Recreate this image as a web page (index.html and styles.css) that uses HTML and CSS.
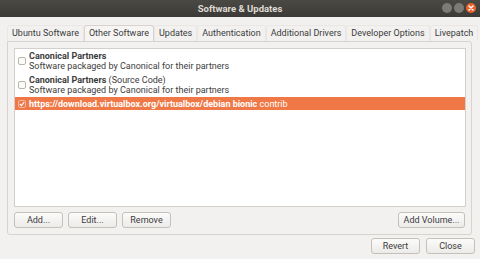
FILE: index.html
```html
<!DOCTYPE html>
<html>
<head>
    <title>Software &amp; Updates</title>
    <link rel="stylesheet" href="styles.css">
</head>
<body>
    <div class="titlebar">
        <div class="title">Software &amp; Updates</div>
        <div class="win-buttons">
            <span class="win-btn"></span>
            <span class="win-btn"></span>
            <span class="win-btn close">
                <svg width="10" height="10" viewBox="0 0 10 10"><path d="M3 3 L7 7 M7 3 L3 7" stroke="#fff" stroke-width="1.4" stroke-linecap="round"/></svg>
            </span>
        </div>
    </div>

    <div class="window">
        <div class="tabs">
            <div class="tab">Ubuntu Software</div>
            <div class="tab active">Other Software</div>
            <div class="tab">Updates</div>
            <div class="tab">Authentication</div>
            <div class="tab">Additional Drivers</div>
            <div class="tab">Developer Options</div>
            <div class="tab">Livepatch</div>
        </div>

        <div class="panel">
            <div class="source-list">
                <div class="source">
                    <span class="check"></span>
                    <div class="source-text">
                        <div><b>Canonical Partners</b></div>
                        <div>Software packaged by Canonical for their partners</div>
                    </div>
                </div>
                <div class="source">
                    <span class="check"></span>
                    <div class="source-text">
                        <div><b>Canonical Partners</b> (Source Code)</div>
                        <div>Software packaged by Canonical for their partners</div>
                    </div>
                </div>
                <div class="source selected">
                    <span class="check checked">
                        <svg width="6" height="6" viewBox="0 0 6 6"><path d="M0.8 3 L2.4 4.6 L5.2 1.2" fill="none" stroke="#fff" stroke-width="1.1"/></svg>
                    </span>
                    <div class="source-text">
                        <div><b>https://download.virtualbox.org/virtualbox/debian bionic</b> contrib</div>
                    </div>
                </div>
            </div>

            <div class="list-actions">
                <button class="btn">Add...</button>
                <button class="btn">Edit...</button>
                <button class="btn">Remove</button>
                <div class="spacer"></div>
                <button class="btn wide">Add Volume...</button>
            </div>
        </div>

        <div class="dialog-actions">
            <button class="btn">Revert</button>
            <button class="btn">Close</button>
        </div>
    </div>
</body>
</html>
```

FILE: styles.css
```css
body {
    margin: 0;
    width: 480px;
    height: 259px;
    overflow: hidden;
    background-color: #f2f1f0;
    font-family: 'Roboto', 'Liberation Sans', sans-serif;
    font-size: 9px;
    color: #3c3c3c;
}

.titlebar {
    height: 17px;
    background: linear-gradient(#4a4944, #3c3b37);
    display: flex;
    align-items: center;
    justify-content: center;
    position: relative;
}

.title {
    color: #dfdbd2;
    font-weight: bold;
    font-size: 9.5px;
}

.win-buttons {
    position: absolute;
    right: 4px;
    top: 3px;
    display: flex;
    gap: 2px;
}

.win-btn {
    width: 10px;
    height: 10px;
    border-radius: 50%;
    background: #7d7b75;
    display: flex;
    align-items: center;
    justify-content: center;
}

.win-btn.close {
    background: #e9632f;
}

.window {
    padding: 8px 8px 0 7px;
}

.tabs {
    display: flex;
}

.tab {
    padding: 0 4px;
    height: 15px;
    line-height: 15px;
    border: 1px solid #e9e7e4;
    border-bottom: none;
    border-radius: 3px 3px 0 0;
    white-space: nowrap;
}

.tab.active {
    background: #f6f5f4;
    border-color: #d7d4cf;
}

.panel {
    border: 1px solid #d7d4cf;
    border-radius: 0 3px 3px 3px;
    height: 194px;
    padding: 6px 5px 0 6px;
    box-sizing: border-box;
}

.source-list {
    background: #ffffff;
    border: 1px solid #d3d0cb;
    height: 159px;
    box-sizing: border-box;
}

.source {
    display: flex;
    align-items: center;
    gap: 3px;
    padding: 2px 3px;
    line-height: 10px;
}

.source.selected {
    background: #f07746;
    color: #ffffff;
    height: 13px;
    padding: 0 3px;
}

.check {
    width: 6px;
    height: 6px;
    border: 1px solid #b8b5b0;
    border-radius: 2px;
    background: #fbfbfa;
    display: flex;
    align-items: center;
    justify-content: center;
}

.check.checked {
    border-color: #f5b79c;
    background: #f07746;
}

.list-actions {
    display: flex;
    gap: 5px;
    margin-top: 5px;
}

.spacer {
    flex: 1;
}

.btn {
    height: 16px;
    width: 49px;
    padding: 0;
    font-family: inherit;
    font-size: 9px;
    color: #3c3c3c;
    background: linear-gradient(#fbfbfa, #ecebe9);
    border: 1px solid #c4c1bb;
    border-radius: 3px;
}

.btn.wide {
    width: 67px;
    margin-right: 1px;
}

.dialog-actions {
    display: flex;
    justify-content: flex-end;
    gap: 6px;
    margin-top: 3px;
    margin-right: -3px;
}
```
